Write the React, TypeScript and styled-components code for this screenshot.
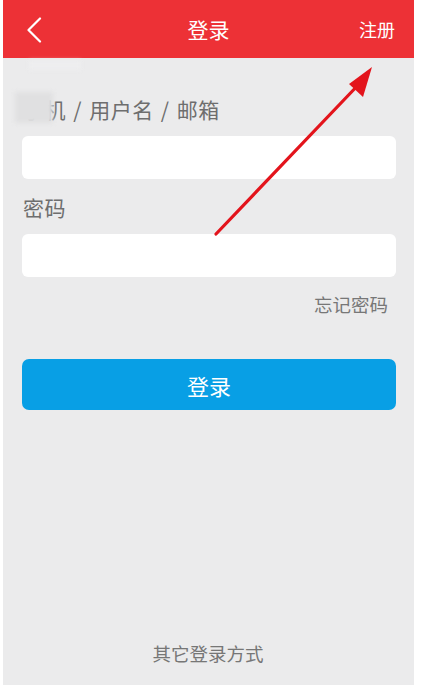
import React from "react";
import styled, { createGlobalStyle } from "styled-components";

const Global = createGlobalStyle`
  html, body { margin: 0; padding: 0; background: #ffffff; }
  body { font-family: "Noto Sans CJK SC", "Noto Sans", sans-serif; }
  * { box-sizing: border-box; }
`;

const Screen = styled.div`
  position: relative;
  margin-left: 3px;
  width: 411px;
  height: 685px;
  background: #ebebec;
  display: flex;
  flex-direction: column;
  overflow: hidden;
`;

const Header = styled.header`
  height: 58px;
  background: #ed3136;
  display: grid;
  grid-template-columns: 80px 1fr 80px;
  align-items: center;
  color: #ffffff;
`;

const BackButton = styled.div`
  display: flex;
  align-items: center;
  padding-left: 23px;
  padding-top: 2px;
`;

const Title = styled.div`
  text-align: center;
  font-size: 21px;
  line-height: 1;
  padding-top: 1px;
`;

const HeaderAction = styled.div`
  text-align: right;
  font-size: 18px;
  padding-right: 19px;
  line-height: 1;
`;

const Form = styled.main`
  display: flex;
  flex-direction: column;
  padding: 0 18px 0 19px;
  flex: 1;
`;

const Label = styled.div<{ $top: number }>`
  margin-top: ${(p) => p.$top}px;
  font-size: 21px;
  line-height: 24px;
  letter-spacing: 0.5px;
  color: #6e6e6e;
  padding-left: 1px;
`;

const Sep = styled.span`
  margin: 0 2px;
`;

const Field = styled.div<{ $top: number }>`
  margin-top: ${(p) => p.$top}px;
  height: 43px;
  background: #ffffff;
  border-radius: 6px;
`;

const Forgot = styled.div`
  margin-top: 16px;
  align-self: flex-end;
  font-size: 18.5px;
  line-height: 22px;
  color: #777777;
  padding-right: 8px;
`;

const LoginButton = styled.div`
  margin-top: 44px;
  height: 51px;
  background: #089fe5;
  border-radius: 7px;
  color: #ffffff;
  font-size: 22px;
  display: flex;
  align-items: center;
  justify-content: center;
`;

const Spacer = styled.div`
  flex: 1;
`;

const OtherWays = styled.div`
  text-align: center;
  font-size: 18.5px;
  color: #767676;
  line-height: 22px;
  margin-bottom: 21px;
  padding-right: 2px;
`;

const Smudge = styled.div<{ $x: number; $y: number; $w: number; $h: number; $c: string }>`
  position: absolute;
  left: ${(p) => p.$x}px;
  top: ${(p) => p.$y}px;
  width: ${(p) => p.$w}px;
  height: ${(p) => p.$h}px;
  background: ${(p) => p.$c};
  filter: blur(2px);
  pointer-events: none;
`;

const ArrowOverlay = styled.svg`
  position: absolute;
  left: 0;
  top: 0;
  pointer-events: none;
`;

export default function App() {
  return (
    <>
      <Global />
      <Screen>
        <Header>
          <BackButton>
            <svg width="16" height="26" viewBox="0 0 16 26">
              <path d="M14 1.5 L2.5 13 L14 24.5" fill="none" stroke="#ffffff" strokeWidth="2.2" strokeLinecap="round" strokeLinejoin="round" />
            </svg>
          </BackButton>
          <Title>登录</Title>
          <HeaderAction>注册</HeaderAction>
        </Header>
        <Form>
          <Label $top={39}>
            手机<Sep> / </Sep>用户名<Sep> / </Sep>邮箱
          </Label>
          <Field $top={15} />
          <Label $top={16}>密码</Label>
          <Field $top={15} />
          <Forgot>忘记密码</Forgot>
          <LoginButton>登录</LoginButton>
          <Spacer />
          <OtherWays>其它登录方式</OtherWays>
        </Form>
        <Smudge $x={12} $y={92} $w={38} $h={31} $c="rgba(224, 224, 225, 1)" />
        <Smudge $x={26} $y={60} $w={52} $h={10} $c="rgba(240, 240, 241, 0.7)" />
        <ArrowOverlay width="411" height="685" viewBox="0 0 411 685">
          <line x1="213" y1="234" x2="358" y2="82" stroke="#e3141c" strokeWidth="3.2" strokeLinecap="round" />
          <polygon points="369,67 346,84 360,97" fill="#e3141c" />
        </ArrowOverlay>
      </Screen>
    </>
  );
}
